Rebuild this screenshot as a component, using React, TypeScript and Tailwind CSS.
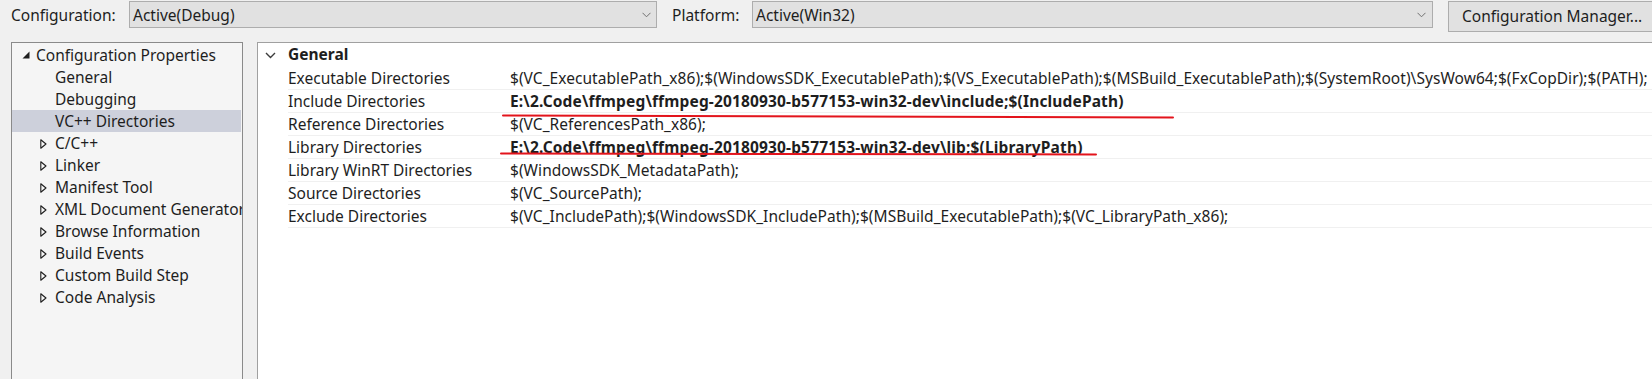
import React from "react";

const font = { fontFamily: '"Noto Sans", "Open Sans", sans-serif' };

function ComboChevron() {
  return (
    <svg width="9" height="6" viewBox="0 0 9 6" className="shrink-0">
      <path d="M0.5 0.8 L4.5 4.8 L8.5 0.8" fill="none" stroke="#707070" strokeWidth="1" />
    </svg>
  );
}

function ExpandedTri() {
  return (
    <svg width="8" height="8" viewBox="0 0 8 8">
      <path d="M7.5 0.5 L7.5 7.5 L0.5 7.5 Z" fill="#1e1e1e" />
    </svg>
  );
}

function CollapsedTri() {
  return (
    <svg width="7" height="10" viewBox="0 0 7 10">
      <path d="M0.8 0.8 L6 5 L0.8 9.2 Z" fill="none" stroke="#1e1e1e" strokeWidth="1.1" strokeLinejoin="round" />
    </svg>
  );
}

type TreeItem = { label: string; kind: "root" | "leaf" | "collapsed"; selected?: boolean };

const tree: TreeItem[] = [
  { label: "Configuration Properties", kind: "root" },
  { label: "General", kind: "leaf" },
  { label: "Debugging", kind: "leaf" },
  { label: "VC++ Directories", kind: "leaf", selected: true },
  { label: "C/C++", kind: "collapsed" },
  { label: "Linker", kind: "collapsed" },
  { label: "Manifest Tool", kind: "collapsed" },
  { label: "XML Document Generator", kind: "collapsed" },
  { label: "Browse Information", kind: "collapsed" },
  { label: "Build Events", kind: "collapsed" },
  { label: "Custom Build Step", kind: "collapsed" },
  { label: "Code Analysis", kind: "collapsed" },
];

type Prop = { name: string; value: string; bold?: boolean };

const props: Prop[] = [
  {
    name: "Executable Directories",
    value:
      "$(VC_ExecutablePath_x86);$(WindowsSDK_ExecutablePath);$(VS_ExecutablePath);$(MSBuild_ExecutablePath);$(SystemRoot)\\SysWow64;$(FxCopDir);$(PATH);",
  },
  {
    name: "Include Directories",
    value: "E:\\2.Code\\ffmpeg\\ffmpeg-20180930-b577153-win32-dev\\include;$(IncludePath)",
    bold: true,
  },
  { name: "Reference Directories", value: "$(VC_ReferencesPath_x86);" },
  {
    name: "Library Directories",
    value: "E:\\2.Code\\ffmpeg\\ffmpeg-20180930-b577153-win32-dev\\lib;$(LibraryPath)",
    bold: true,
  },
  { name: "Library WinRT Directories", value: "$(WindowsSDK_MetadataPath);" },
  { name: "Source Directories", value: "$(VC_SourcePath);" },
  {
    name: "Exclude Directories",
    value: "$(VC_IncludePath);$(WindowsSDK_IncludePath);$(MSBuild_ExecutablePath);$(VC_LibraryPath_x86);",
  },
];

export default function App() {
  return (
    <div
      className="relative w-[1652px] h-[379px] overflow-hidden bg-[#f0f0f0] text-[15.5px] text-[#1e1e1e] leading-none"
      style={font}
    >
      {/* Top bar */}
      <div className="flex items-start h-[42px] pt-[1px] pl-[11px] whitespace-nowrap">
        <div className="w-[118px] shrink-0 h-[27px] pt-[2px] flex items-center">Configuration:</div>
        <div className="w-[528px] shrink-0 h-[27px] flex items-center justify-between bg-[#e1e1e1] border border-[#adadad] pl-[3px] pr-[5px]">
          <span className="pt-[2px]">Active(Debug)</span>
          <ComboChevron />
        </div>
        <div className="ml-[15px] w-[80px] shrink-0 h-[27px] pt-[2px] flex items-center">Platform:</div>
        <div className="w-[681px] shrink-0 h-[27px] flex items-center justify-between bg-[#e1e1e1] border border-[#adadad] pl-[3px] pr-[6px]">
          <span className="pt-[2px]">Active(Win32)</span>
          <ComboChevron />
        </div>
        <div className="ml-[15px] w-[230px] h-[31px] flex items-center bg-[#e1e1e1] border border-[#adadad] pl-[13px] pt-[1px] shrink-0">
          Configuration Manager...
        </div>
      </div>

      {/* Panels */}
      <div className="flex h-[337px]">
        {/* Tree */}
        <div className="ml-[11px] w-[232px] shrink-0 h-[345px] bg-[#f5f5f5] border border-[#8a8a8a] pt-[1px] overflow-hidden">
          {tree.map((t) => (
            <div
              key={t.label}
              className={`flex items-center h-[22px] pt-[2px] whitespace-nowrap ${t.selected ? "bg-[#cdd0db] mr-[1px]" : ""}`}
            >
              {t.kind === "root" && (
                <>
                  <div className="w-[10px] shrink-0" />
                  <div className="w-[14px] shrink-0 flex items-center -mt-[2px]">
                    <ExpandedTri />
                  </div>
                </>
              )}
              {t.kind === "leaf" && <div className="w-[43px] shrink-0" />}
              {t.kind === "collapsed" && (
                <>
                  <div className="w-[28px] shrink-0" />
                  <div className="w-[15px] shrink-0 flex items-center">
                    <CollapsedTri />
                  </div>
                </>
              )}
              <span>{t.label}</span>
            </div>
          ))}
        </div>

        {/* Property grid */}
        <div className="ml-[14px] flex-1 h-[345px] bg-white border-l border-t border-[#a0a0a0] overflow-hidden">
          <div className="flex items-center h-[24px]">
            <div className="w-[7px] shrink-0" />
            <div className="w-[23px] shrink-0 flex items-center">
              <svg width="11" height="7" viewBox="0 0 11 7">
                <path d="M1 1 L5.5 5.5 L10 1" fill="none" stroke="#3c3c3c" strokeWidth="1.4" />
              </svg>
            </div>
            <span className="font-bold">General</span>
          </div>
          <div className="flex flex-col">
            {props.map((p) => (
              <div key={p.name} className="flex h-[23px] items-center whitespace-nowrap">
                <div className="w-[30px] h-full shrink-0" />
                <div className="w-[222px] h-full shrink-0 flex items-center pt-[2px] border-b border-[#f0f0f0]">
                  {p.name}
                </div>
                <div
                  className={`flex-1 h-full flex items-center pt-[2px] border-b border-[#f0f0f0] ${
                    p.bold ? "font-bold tracking-[0.15px]" : "tracking-[0.05px]"
                  }`}
                >
                  {p.value}
                </div>
              </div>
            ))}
          </div>
        </div>
      </div>

      {/* Red annotation underlines */}
      <svg className="absolute inset-0 pointer-events-none" width="1652" height="379" viewBox="0 0 1652 379">
        <path d="M503 115.5 Q 700 117.5 1173 117.5" fill="none" stroke="#e3141c" strokeWidth="2" strokeLinecap="round" />
        <path d="M501 153.5 Q 700 154.5 1096 154.5" fill="none" stroke="#e3141c" strokeWidth="2" strokeLinecap="round" />
      </svg>
    </div>
  );
}
